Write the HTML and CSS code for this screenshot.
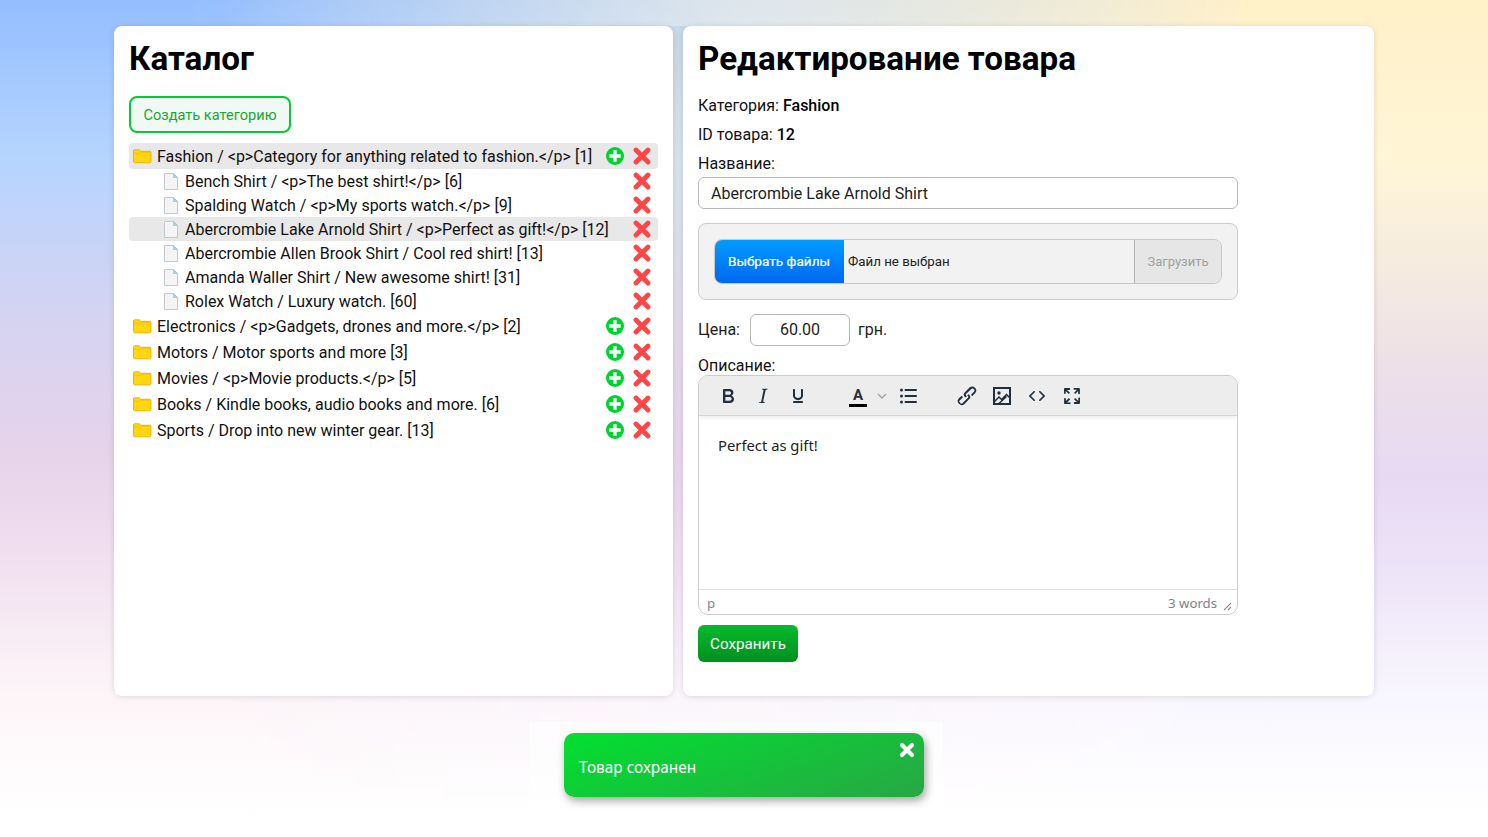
FILE: index.html
```html
<!DOCTYPE html>
<html lang="ru">
<head>
<meta charset="utf-8">
<title>Каталог</title>
<link rel="stylesheet" href="styles.css">
</head>
<body>
<svg class="defs" width="0" height="0" aria-hidden="true">
  <symbol id="folder" viewBox="0 0 20 16">
    <path d="M1.500 3C1.500 2.300 2 1.800 2.700 1.800H7.200L8.800 3.300H17.800C18.500 3.300 19 3.800 19 4.500V13.600C19 14.300 18.500 14.800 17.800 14.800H2.700C2 14.800 1.500 14.300 1.500 13.600Z" fill="#ffd60f" stroke="#e8ae00" stroke-width=".9"/>
    <path d="M2 5.200H9L10 4.200H18.500" stroke="#f5b400" stroke-width=".7" fill="none"/>
  </symbol>
  <symbol id="file" viewBox="0 0 14 17">
    <path d="M.5.5H9.5L13.5 4.5V16.5H.5Z" fill="#f4f4f4" stroke="#c4c8cc"/>
    <path d="M9.500.5V4.500H13.500Z" fill="#a9d3e8" stroke="#8fbcd4" stroke-width=".6"/>
  </symbol>
  <symbol id="plus" viewBox="0 0 18 18">
    <circle cx="9" cy="9" r="9" fill="#00d230"/>
    <path d="M9 3.300V14.700M3.300 9H14.700" stroke="#fff" stroke-width="3.300"/>
  </symbol>
  <symbol id="cross" viewBox="0 0 18 18">
    <path d="M3 3L15 15M15 3L3 15" stroke="#ff4545" stroke-width="4.800" stroke-linecap="round"/>
  </symbol>
</svg>

<main class="page">
  <section class="card catalog">
    <h1>Каталог</h1>
    <button class="create">Создать категорию</button>
    <ul class="tree">
      <li class="row cat active"><svg class="folder"><use href="#folder"/></svg><span class="label">Fashion / &lt;p&gt;Category for anything related to fashion.&lt;/p&gt; [1]</span><svg class="act plus"><use href="#plus"/></svg><svg class="act"><use href="#cross"/></svg></li>
      <li class="row item"><svg class="file"><use href="#file"/></svg><span class="label">Bench Shirt / &lt;p&gt;The best shirt!&lt;/p&gt; [6]</span><svg class="act"><use href="#cross"/></svg></li>
      <li class="row item"><svg class="file"><use href="#file"/></svg><span class="label">Spalding Watch / &lt;p&gt;My sports watch.&lt;/p&gt; [9]</span><svg class="act"><use href="#cross"/></svg></li>
      <li class="row item active"><svg class="file"><use href="#file"/></svg><span class="label">Abercrombie Lake Arnold Shirt / &lt;p&gt;Perfect as gift!&lt;/p&gt; [12]</span><svg class="act"><use href="#cross"/></svg></li>
      <li class="row item"><svg class="file"><use href="#file"/></svg><span class="label">Abercrombie Allen Brook Shirt / Cool red shirt! [13]</span><svg class="act"><use href="#cross"/></svg></li>
      <li class="row item"><svg class="file"><use href="#file"/></svg><span class="label">Amanda Waller Shirt / New awesome shirt! [31]</span><svg class="act"><use href="#cross"/></svg></li>
      <li class="row item"><svg class="file"><use href="#file"/></svg><span class="label">Rolex Watch / Luxury watch. [60]</span><svg class="act"><use href="#cross"/></svg></li>
      <li class="row cat"><svg class="folder"><use href="#folder"/></svg><span class="label">Electronics / &lt;p&gt;Gadgets, drones and more.&lt;/p&gt; [2]</span><svg class="act plus"><use href="#plus"/></svg><svg class="act"><use href="#cross"/></svg></li>
      <li class="row cat"><svg class="folder"><use href="#folder"/></svg><span class="label">Motors / Motor sports and more [3]</span><svg class="act plus"><use href="#plus"/></svg><svg class="act"><use href="#cross"/></svg></li>
      <li class="row cat"><svg class="folder"><use href="#folder"/></svg><span class="label">Movies / &lt;p&gt;Movie products.&lt;/p&gt; [5]</span><svg class="act plus"><use href="#plus"/></svg><svg class="act"><use href="#cross"/></svg></li>
      <li class="row cat"><svg class="folder"><use href="#folder"/></svg><span class="label">Books / Kindle books, audio books and more. [6]</span><svg class="act plus"><use href="#plus"/></svg><svg class="act"><use href="#cross"/></svg></li>
      <li class="row cat"><svg class="folder"><use href="#folder"/></svg><span class="label">Sports / Drop into new winter gear. [13]</span><svg class="act plus"><use href="#plus"/></svg><svg class="act"><use href="#cross"/></svg></li>
    </ul>
  </section>

  <section class="card editor">
    <h1>Редактирование товара</h1>
    <div class="form">
      <p class="meta">Категория: <b>Fashion</b></p>
      <p class="meta">ID товара: <b>12</b></p>
      <label class="field-label">Название:</label>
      <div class="input name">Abercrombie Lake Arnold Shirt</div>
      <div class="upload">
        <div class="file-box">
          <span class="choose">Выбрать файлы</span>
          <span class="no-file">Файл не выбран</span>
          <span class="send">Загрузить</span>
        </div>
      </div>
      <div class="price">
        <span>Цена:</span>
        <div class="input amount">60.00</div>
        <span>грн.</span>
      </div>
      <label class="field-label desc">Описание:</label>
      <div class="tiny">
        <div class="toolbar">
          <svg class="tool t-b" viewBox="0 0 24 24"><path fill-rule="evenodd" d="M7.800 19c-.3 0-.5 0-.6-.2l-.2-.5V5.700c0-.2 0-.4.2-.5l.6-.2h5c1.500 0 2.700.3 3.500 1 .7.600 1.100 1.400 1.100 2.500a3 3 0 0 1-.6 1.900c-.4.600-1 1-1.600 1.200.4.100.9.300 1.300.6s.8.700 1 1.200c.4.400.5 1 .5 1.600 0 1.300-.4 2.300-1.300 3-.8.700-2.100 1-3.800 1H7.800zm5-8.300c.6 0 1.200-.1 1.600-.5.400-.3.600-.7.600-1.300 0-1.100-.8-1.700-2.300-1.700H9.300v3.500h3.500zm.5 6c.7 0 1.300-.1 1.700-.4.400-.4.600-.9.600-1.500s-.2-1-.7-1.400c-.4-.3-1-.4-2-.4H9.400v3.800h4z" fill="#222f3e"/></svg>
          <svg class="tool t-i" viewBox="0 0 24 24"><path d="M16.700 4.700l-.1.900h-.3c-.6 0-1 0-1.400.3-.3.300-.4.600-.5 1.100l-2.100 9.800v.6c0 .5.400.8 1.400.8h.2l-.2.800H8l.2-.8h.2c1.100 0 1.800-.5 2-1.500l2-9.800.1-.5c0-.6-.4-.8-1.400-.8h-.3l.2-.9h5.800z" fill="#222f3e"/></svg>
          <svg class="tool t-u" viewBox="0 0 24 24"><path d="M16 5c.6 0 1 .4 1 1v5.500a4 4 0 0 1-.4 1.800l-1 1.400a5.300 5.300 0 0 1-5.500 1 5 5 0 0 1-1.600-1c-.5-.4-.8-.9-1.100-1.400a4 4 0 0 1-.4-1.800V6c0-.6.400-1 1-1s1 .4 1 1v5.500c0 .3 0 .6.200 1l.6.700a3.300 3.300 0 0 0 2.200.8 3.400 3.400 0 0 0 2.200-.8c.3-.2.400-.5.600-.8l.2-.9V6c0-.6.400-1 1-1zM8 17h8c.6 0 1 .4 1 1s-.4 1-1 1H8a1 1 0 0 1 0-2z" fill="#222f3e"/></svg>
          <div class="t-color">
            <span class="color-a">A</span>
            <span class="color-bar"></span>
          </div>
          <svg class="t-chev" viewBox="0 0 10 6"><path d="M1 1L5 5L9 1" stroke="#9aa1a8" stroke-width="1.300" fill="none"/></svg>
          <svg class="tool t-list" viewBox="0 0 24 24"><path d="M9.500 6H20M9.500 12H20M9.500 18H20" stroke="#222f3e" stroke-width="2" stroke-linecap="round"/><circle cx="5.500" cy="6" r="1.500" fill="#222f3e"/><circle cx="5.500" cy="12" r="1.500" fill="#222f3e"/><circle cx="5.500" cy="18" r="1.500" fill="#222f3e"/></svg>
          <svg class="tool t-link" viewBox="0 0 24 24"><path d="M6.200 12.300a1 1 0 0 1 1.400 1.400l-2.100 2a2 2 0 1 0 2.700 2.800l4.800-4.800a1 1 0 0 0 0-1.400 1 1 0 1 1 1.300-1.400 3 3 0 0 1 0 4.200l-4.800 4.900a4 4 0 0 1-5.600-5.700l2.300-2.100zm11.600-.6a1 1 0 0 1-1.400-1.400l2-2a2 2 0 1 0-2.600-2.800L11 9.900a1 1 0 0 0 0 1.400 1 1 0 1 1-1.300 1.400 3 3 0 0 1 0-4.200l4.800-4.900a4 4 0 0 1 5.600 5.700l-2.300 2.100z" fill="#222f3e"/></svg>
          <svg class="tool t-img" viewBox="0 0 24 24"><rect x="4" y="4" width="16" height="16" fill="none" stroke="#222f3e" stroke-width="2"/><circle cx="9" cy="9" r="1.700" fill="#222f3e"/><path d="M4.500 17.500L9 13L11.500 15.500L16.500 10.500L19.500 13.500M9 19.500L16.500 12.500" stroke="#222f3e" stroke-width="1.500" fill="none"/></svg>
          <svg class="tool t-code" viewBox="0 0 24 24"><path d="M9.800 15.700c.3.300.3.800 0 1-.3.400-.9.400-1.200 0l-4.400-4.100a.8.800 0 0 1 0-1.200l4.400-4.200c.3-.3.900-.3 1.200 0 .3.300.3.800 0 1.100L6 12l3.800 3.700zM14.200 15.700c-.3.300-.3.800 0 1 .4.400.9.400 1.300 0l4.300-4.100c.3-.3.400-.8 0-1.200l-4.300-4.200a.8.800 0 0 0-1.300 0c-.3.300-.3.800 0 1.100L18 12l-3.800 3.700z" fill="#222f3e"/></svg>
          <svg class="tool t-full" viewBox="0 0 24 24"><path d="M15.300 10l-1.200-1.300 2.900-3h-2.300a.9.900 0 1 1 0-1.700H19c.5 0 .9.400.9.900v4.400a.9.900 0 1 1-1.800 0V7l-2.900 3zm0 4l3 3v-2.300a.9.900 0 1 1 1.700 0V19c0 .5-.4.900-.9.900h-4.400a.9.900 0 1 1 0-1.800H17l-3-2.900 1.300-1.200zM10 15.400l-2.900 3h2.300a.9.900 0 1 1 0 1.700H5a.9.900 0 0 1-.9-.9v-4.400a.9.900 0 1 1 1.800 0V17l2.900-3 1.200 1.300zM8.700 10L5.700 7v2.300a.9.900 0 0 1-1.700 0V5c0-.5.400-.9.900-.9h4.400a.9.900 0 0 1 0 1.800H7l3 2.900L8.700 10z" fill="#222f3e"/></svg>
        </div>
        <div class="content">Perfect as gift!</div>
        <div class="status">
          <span>p</span>
          <span class="words">3 words</span>
          <svg class="grip" viewBox="0 0 10 10"><path d="M9 2L2 9M9 6L6 9" stroke="#8a9097" stroke-width="1.100"/></svg>
        </div>
      </div>
      <button class="save">Сохранить</button>
    </div>
  </section>
</main>

<div class="toast-wrap">
  <div class="toast">
    <span>Товар сохранен</span>
    <svg class="toast-x" viewBox="0 0 16 16"><path d="M3 3L13 13M13 3L3 13" stroke="#fff" stroke-width="4.200" stroke-linecap="round"/></svg>
  </div>
</div>
</body>
</html>
```
FILE: styles.css
```css
* { box-sizing: border-box; }
html, body { height: 100%; }
body {
  margin: 0;
  height: 837px;
  overflow: hidden;
  font-family: Roboto, "Liberation Sans", sans-serif;
  font-size: 16px;
  color: #000;
  background: linear-gradient(180deg, #93beff 0%, #b6d4ff 19%, #d4d3f2 37%, #e6d3ea 54%, #efdcee 64%, #fdf5f8 83%, #fff 98%);
  position: relative;
}
body::before {
  content: "";
  position: absolute;
  inset: 0;
  background: linear-gradient(180deg, #fff0c8 0%, #fff6d6 19%, #f5ebe0 32%, #ecdfe8 45%, #e8d9f3 57%, #ece2f7 67%, #f8f6fe 83%, #fff 98%);
  -webkit-mask-image: linear-gradient(90deg, transparent 12%, #000 84%);
  mask-image: linear-gradient(90deg, transparent 12%, #000 84%);
}
.defs { position: absolute; }
.page {
  position: relative;
  display: flex;
  gap: 10px;
  padding: 26px 114px 0;
  background: linear-gradient(90deg, rgba(255,255,255,0) 15%, rgba(255,255,255,.35) 50%, rgba(255,255,255,0) 85%) no-repeat 0 0 / 100% 26px;
}
.card {
  background: #fff;
  border-radius: 8px;
  height: 670px;
  padding: 0 15px;
  box-shadow: 0 1px 6px rgba(0,0,0,.12);
}
.catalog { width: 559px; }
.editor { width: 691px; }
h1 {
  margin: 0;
  font-size: 33.200px;
  line-height: 38px;
  font-weight: 700;
  padding-top: 14px;
  height: 70px;
}
.create {
  display: block;
  width: 162px;
  height: 37px;
  padding: 0;
  border: 2px solid #06c935;
  border-radius: 8px;
  background: #f1f9f4;
  color: #1aa62f;
  font: 14.600px Roboto, sans-serif;
}
.tree { list-style: none; margin: 10px 0 0; padding: 0; }
.row {
  display: flex;
  align-items: center;
  border-radius: 4px;
  white-space: nowrap;
  font-size: 16px;
  color: #111;
}
.cat { height: 26px; padding-left: 3px; }
.item { height: 24px; padding-left: 35px; }
.active { background: #e8e8e8; }
.folder { width: 20px; height: 16px; flex: none; margin-right: 5px; }
.file { width: 14px; height: 17px; flex: none; margin-right: 7px; }
.label { flex: 1; }
.act { width: 18px; height: 18px; flex: none; margin-right: 7px; }
.plus { margin-right: 9px; }
.form { width: 540px; padding-top: 1px; }
.meta { margin: 0 0 11px; line-height: 18px; color: #111; }
.meta b { font-weight: 500; color: #000; }
.field-label { display: block; line-height: 18px; color: #111; }
.input {
  border: 1px solid #b8b8b8;
  border-radius: 6px;
  background: #fff;
  color: #222;
}
.name { margin-top: 4px; height: 32px; line-height: 31px; padding-left: 12px; }
.upload {
  margin-top: 14px;
  height: 77px;
  padding: 15px;
  background: #f2f2f2;
  border: 1px solid #ccc;
  border-radius: 8px;
}
.file-box {
  display: flex;
  align-items: stretch;
  height: 45px;
  border: 1px solid #c8c8c8;
  border-radius: 8px;
  overflow: hidden;
  font-size: 13.300px;
}
.choose {
  width: 130px;
  margin: -1px 0 -1px -1px;
  padding-bottom: 2px;
  background: linear-gradient(180deg, #009dff, #0066f0);
  color: #fff;
  font-size: 13.600px;
  -webkit-text-stroke: .2px #fff;
  display: flex;
  align-items: center;
  justify-content: center;
}
.no-file { flex: 1; display: flex; align-items: center; padding-left: 4px; color: #222; }
.send {
  width: 87px;
  background: #e6e6e6;
  border-left: 1px solid #b4b4b4;
  color: #a0a0a0;
  font-size: 13px;
  display: flex;
  align-items: center;
  justify-content: center;
}
.price { display: flex; align-items: center; margin-top: 14px; height: 32px; color: #222; }
.price > span { padding-bottom: 2px; }
.amount { width: 100px; height: 32px; line-height: 29px; text-align: center; margin: 0 8px 0 10px; }
.desc { margin-top: 11px; }
.tiny {
  height: 240px;
  border: 1px solid #ccc;
  border-radius: 10px;
  overflow: hidden;
  display: flex;
  flex-direction: column;
  background: #fff;
}
.toolbar {
  flex: none;
  height: 40px;
  background: #ededed;
  border-bottom: 1px solid #d4d4d4;
  box-shadow: 0 2px 4px rgba(0,0,0,.08);
  display: flex;
  align-items: center;
  position: relative;
}
.tool { width: 24px; height: 24px; flex: none; }
.t-b { margin-left: 17px; }
.t-i { margin-left: 11px; }
.t-u { margin-left: 11px; }
.t-color { margin-left: 39px; width: 18px; height: 24px; position: relative; display: flex; flex-direction: column; align-items: center; }
.color-a { font: 700 15px/22px Roboto, sans-serif; color: #222f3e; }
.color-bar { position: absolute; left: 0; right: 0; bottom: 1px; height: 3px; background: #000; }
.t-chev { width: 10px; height: 6px; margin-left: 10px; flex: none; }
.t-list { margin-left: 9px; }
.t-link { margin-left: 35px; }
.t-img { margin-left: 11px; }
.t-code { margin-left: 11px; }
.t-full { margin-left: 11px; }
.content {
  flex: 1;
  padding: 19px 19px;
  font: 14.800px/20px "Noto Sans", "Open Sans", sans-serif;
  color: #222;
}
.status {
  flex: none;
  height: 25px;
  border-top: 1px solid #ddd;
  display: flex;
  align-items: center;
  padding: 2px 5px 0 8px;
  font: 13.200px "Noto Sans", sans-serif;
  color: #7d8389;
}
.words { margin-left: auto; }
.grip { width: 10px; height: 10px; margin: 6px 0 0 5px; flex: none; }
.save {
  display: block;
  margin-top: 10px;
  width: 100px;
  height: 37px;
  padding: 0;
  border: 0;
  border-radius: 6px;
  background: linear-gradient(180deg, #06ba2c, #008f1f);
  color: #fff;
  font: 15.200px Roboto, sans-serif;
}
.toast-wrap {
  position: absolute;
  left: 529px;
  top: 722px;
  width: 414px;
  height: 94px;
  padding: 11px 35px;
  background: rgba(255,255,255,.6);
}
.toast {
  position: relative;
  width: 360px;
  height: 64px;
  border-radius: 10px;
  background: linear-gradient(160deg, #01e030, #28a745);
  box-shadow: 2px 4px 8px rgba(0,0,0,.35);
  color: #fff;
  font: 15.400px/64px "Noto Sans", "Open Sans", sans-serif;
  padding: 3px 15px 0;
}
.toast-x { position: absolute; right: 9px; top: 9px; width: 16px; height: 16px; }
```
